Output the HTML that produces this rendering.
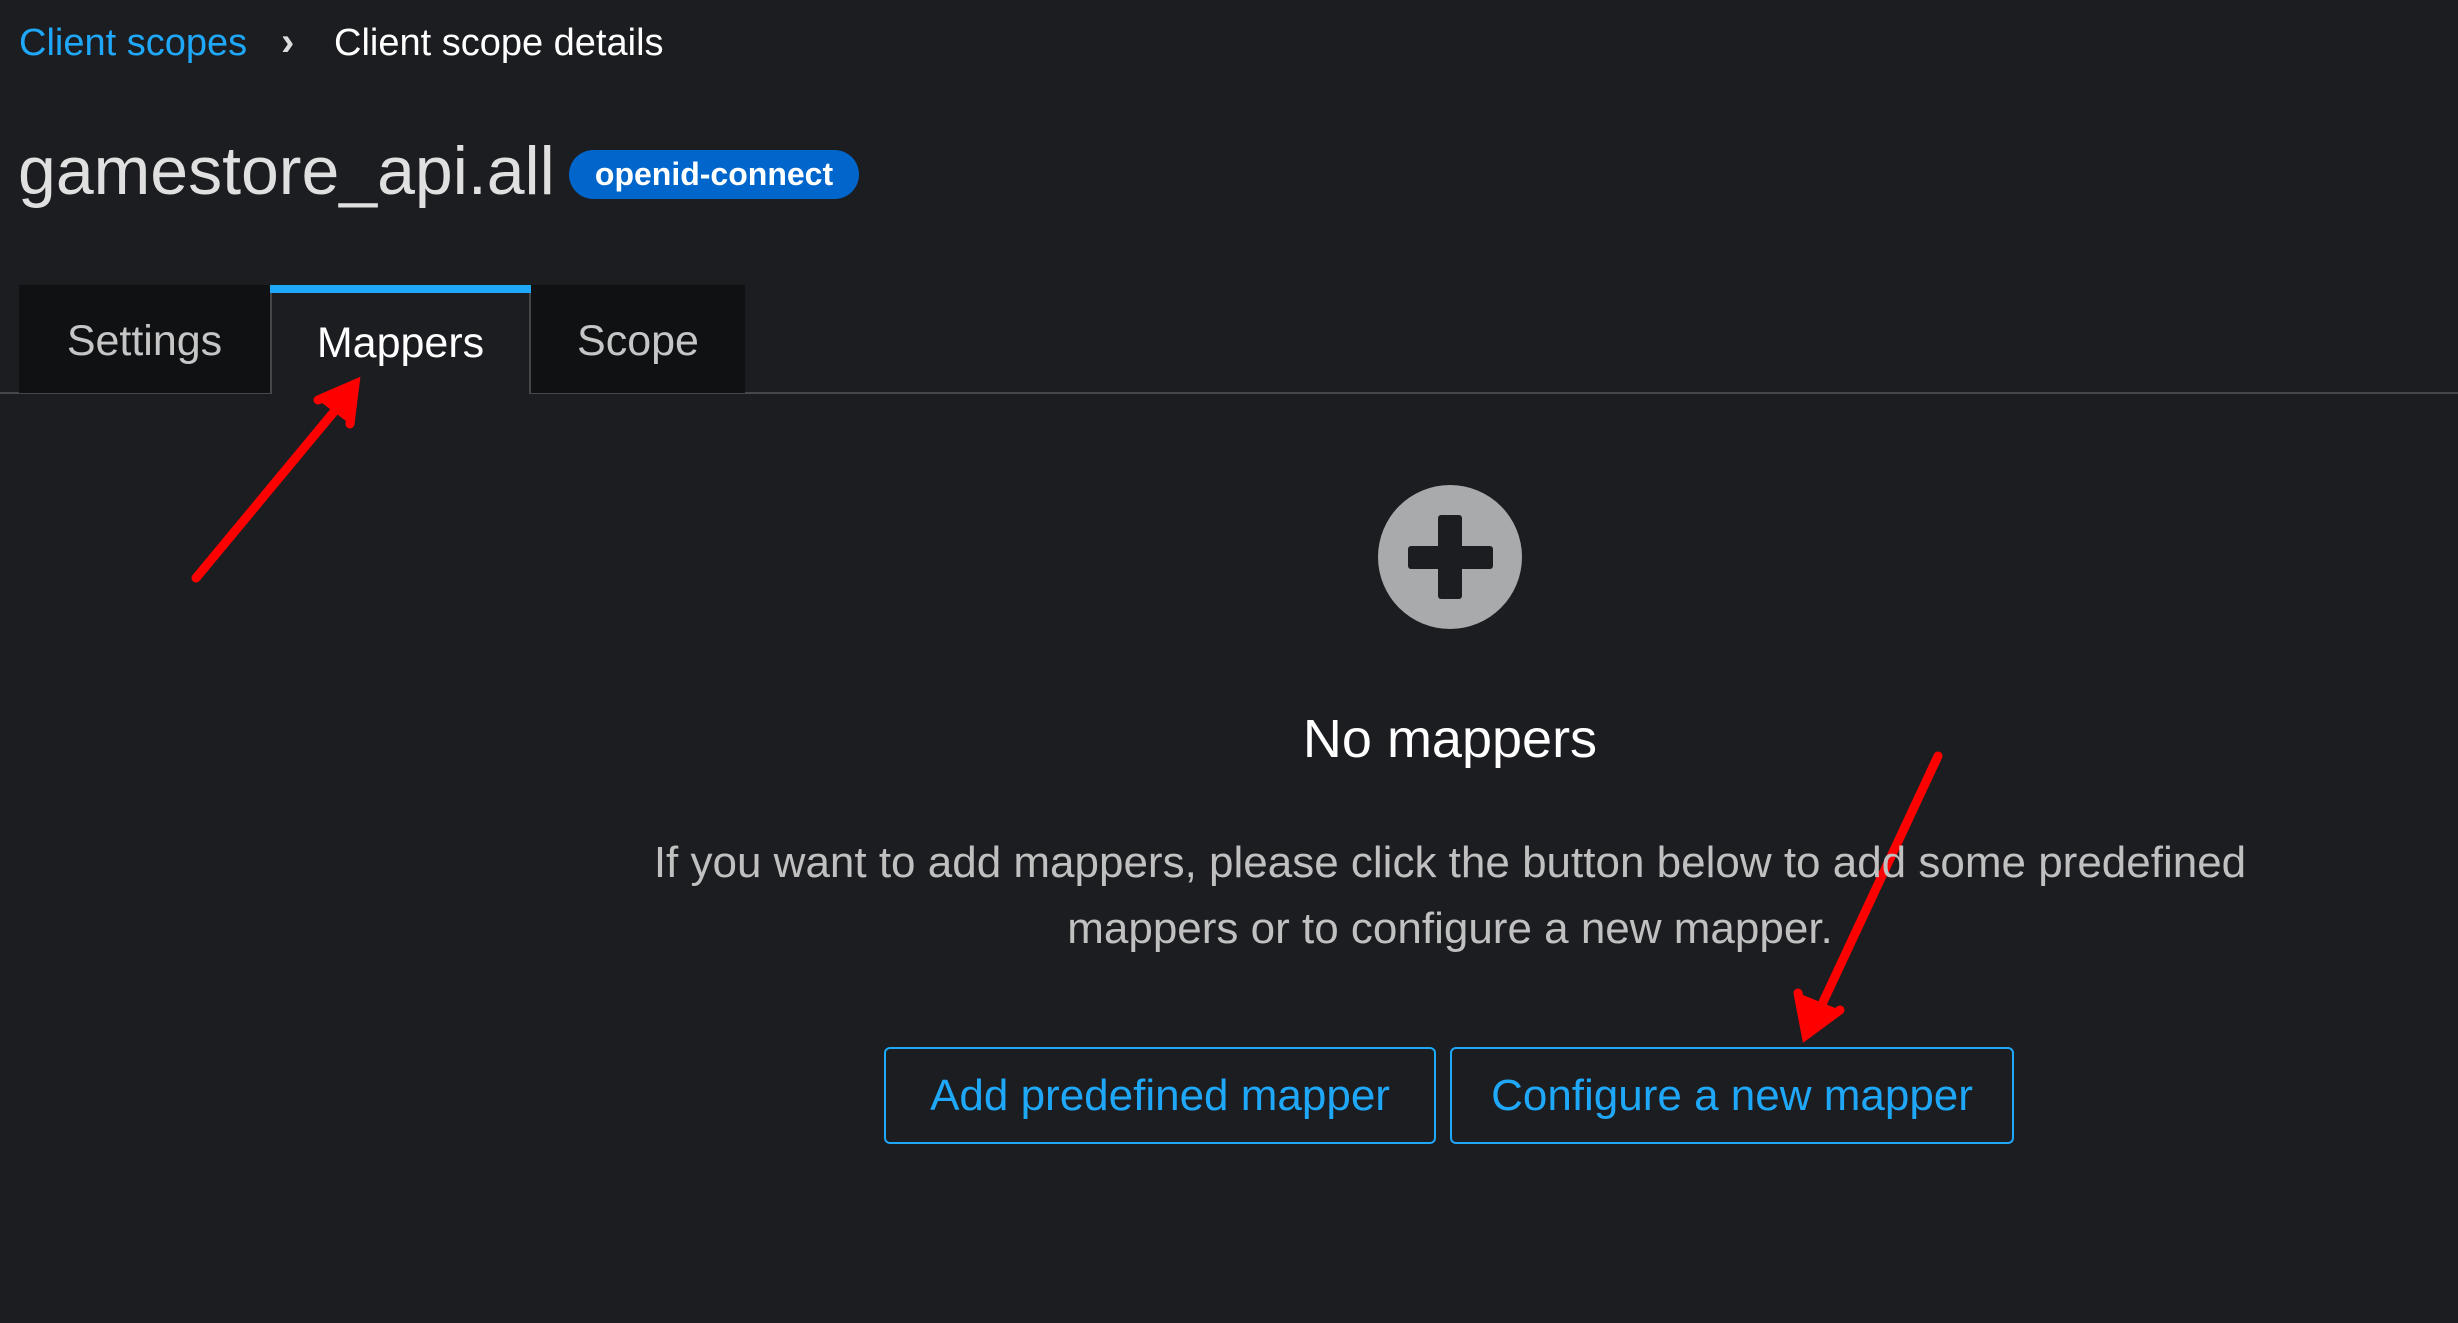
<!DOCTYPE html>
<html><head><meta charset="utf-8"><style>
html,body{margin:0;padding:0;}
body{width:2458px;height:1323px;background:#1c1d21;position:relative;overflow:hidden;font-family:"Liberation Sans",sans-serif;}
.a{position:absolute;white-space:nowrap;}
</style></head><body>
<div class="a" style="left:19px;top:22px;font-size:38px;color:#1fa7f8;">Client scopes</div>
<div class="a" style="left:281px;top:20px;font-size:40px;color:#ddd;font-weight:bold;">›</div>
<div class="a" style="left:334px;top:22px;font-size:38px;color:#fff;">Client scope details</div>
<div class="a" style="left:18px;top:132px;font-size:68px;color:#e0e0e0;">gamestore_api.all</div>
<div class="a" style="left:569px;top:150px;width:290px;height:49px;background:#0066cc;border-radius:25px;color:#fff;font-size:32px;font-weight:bold;text-align:center;line-height:49px;">openid-connect</div>
<div class="a" style="left:0;top:392px;width:2458px;height:2px;background:#45474b;"></div>
<div class="a" style="left:19px;top:285px;width:251px;height:108px;background:#0f1113;color:#c6c6c6;font-size:43px;line-height:112px;text-align:center;">Settings</div>
<div class="a" style="left:270px;top:285px;width:261px;height:109px;background:#1c1d21;border-left:2px solid #45474b;border-right:2px solid #45474b;box-sizing:border-box;"><div style="height:8px;background:#1fa7f8;margin:0 -2px;"></div><div style="color:#fff;font-size:43px;line-height:100px;text-align:center;">Mappers</div></div>
<div class="a" style="left:531px;top:285px;width:214px;height:108px;background:#0f1113;color:#c6c6c6;font-size:43px;line-height:112px;text-align:center;">Scope</div>
<svg class="a" style="left:0;top:0;" width="2458" height="1323">
<circle cx="1450" cy="557" r="72" fill="#a9aaac"/>
<rect x="1408" y="546" width="85" height="23" rx="3" fill="#1c1d21"/>
<rect x="1438" y="515" width="24" height="84" rx="3" fill="#1c1d21"/>
<g stroke="#ff0000" stroke-width="9" stroke-linecap="round" fill="none">
<line x1="196" y1="578" x2="352" y2="390"/>
<path d="M318 400 L355 384 L350 424" fill="#ff0000"/>
<line x1="1938" y1="756" x2="1810" y2="1030"/>
<path d="M1798 993 L1806 1035 L1840 1010" fill="#ff0000"/>
</g>
</svg>
<div class="a" style="left:0;width:2900px;top:708px;text-align:center;font-size:54px;color:#fff;">No mappers</div>
<div class="a" style="left:620px;width:1660px;top:830px;text-align:center;font-size:44px;line-height:66px;color:#c0c0c0;white-space:normal;">If you want to add mappers, please click the button below to add some predefined mappers or to configure a new mapper.</div>
<div class="a" style="left:884px;top:1047px;width:552px;height:97px;border:2px solid #1fa7f8;border-radius:6px;box-sizing:border-box;color:#1fa7f8;font-size:44px;line-height:93px;text-align:center;">Add predefined mapper</div>
<div class="a" style="left:1450px;top:1047px;width:564px;height:97px;border:2px solid #1fa7f8;border-radius:6px;box-sizing:border-box;color:#1fa7f8;font-size:44px;line-height:93px;text-align:center;">Configure a new mapper</div>
</body></html>
